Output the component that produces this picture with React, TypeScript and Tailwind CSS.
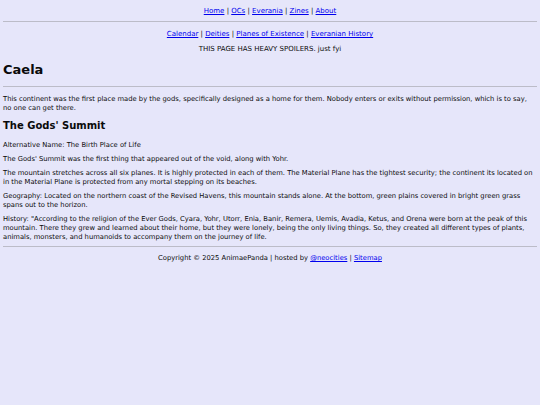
import React from "react";

const topLinks = ["Home", "OCs", "Everania", "Zines", "About"];
const loreLinks = ["Calendar", "Deities", "Planes of Existence", "Everanian History"];

function LinkRow({ links }: { links: string[] }) {
  return (
    <nav className="text-center text-[7px]">
      {links.map((l, i) => (
        <React.Fragment key={l}>
          {i > 0 && " | "}
          <a href="#" className="text-[#0000ee] underline">
            {l}
          </a>
        </React.Fragment>
      ))}
    </nav>
  );
}

export default function App() {
  return (
    <div
      className="min-h-[405px] bg-[#e6e6fa] px-[3px] text-[6.78px] leading-[9px] text-[#0a0a0a]"
      style={{ fontFamily: '"DejaVu Sans", Verdana, sans-serif' }}
    >
      <div className="pt-[7px]">
        <LinkRow links={topLinks} />
      </div>
      <hr className="mt-[5px] border-t border-[#bcbcc8]" />
      <div className="mt-[8px]">
        <LinkRow links={loreLinks} />
      </div>
      <p className="mt-[6px] text-center text-[7px]">THIS PAGE HAS HEAVY SPOILERS. just fyi</p>

      <h1 className="mt-[8px] text-[13px] font-bold leading-[16px]">Caela</h1>
      <hr className="mt-[8px] border-t border-[#bcbcc8]" />
      <p className="mt-[8px]">
        This continent was the first place made by the gods, specifically designed as a home for them. Nobody enters or
        exits without permission, which is to say, no one can get there.
      </p>

      <h2 className="mt-[7px] text-[10px] font-bold leading-[12px]">The Gods' Summit</h2>
      <div className="mt-[9px] flex flex-col gap-[5px]">
        <p>Alternative Name: The Birth Place of Life</p>
        <p>The Gods' Summit was the first thing that appeared out of the void, along with Yohr.</p>
        <p>
          The mountain stretches across all six planes. It is highly protected in each of them. The Material Plane has
          the tightest security; the continent its located on in the Material Plane is protected from any mortal stepping
          on its beaches.
        </p>
        <p>
          Geography: Located on the northern coast of the Revised Havens, this mountain stands alone. At the bottom, green
          plains covered in bright green grass spans out to the horizon.
        </p>
        <p>
          History: "According to the religion of the Ever Gods, Cyara, Yohr, Utorr, Enia, Banir, Remera, Uemis, Avadia,
          Ketus, and Orena were born at the peak of this mountain. There they grew and learned about their home, but they
          were lonely, being the only living things. So, they created all different types of plants, animals, monsters,
          and humanoids to accompany them on the journey of life.
        </p>
      </div>

      <hr className="mt-[4px] border-t border-[#bcbcc8]" />
      <footer className="mt-[7px] text-center">
        Copyright © 2025 AnimaePanda | hosted by{" "}
        <a href="#" className="text-[#0000ee] underline">
          @neocities
        </a>{" "}
        |{" "}
        <a href="#" className="text-[#0000ee] underline">
          Sitemap
        </a>
      </footer>
    </div>
  );
}
